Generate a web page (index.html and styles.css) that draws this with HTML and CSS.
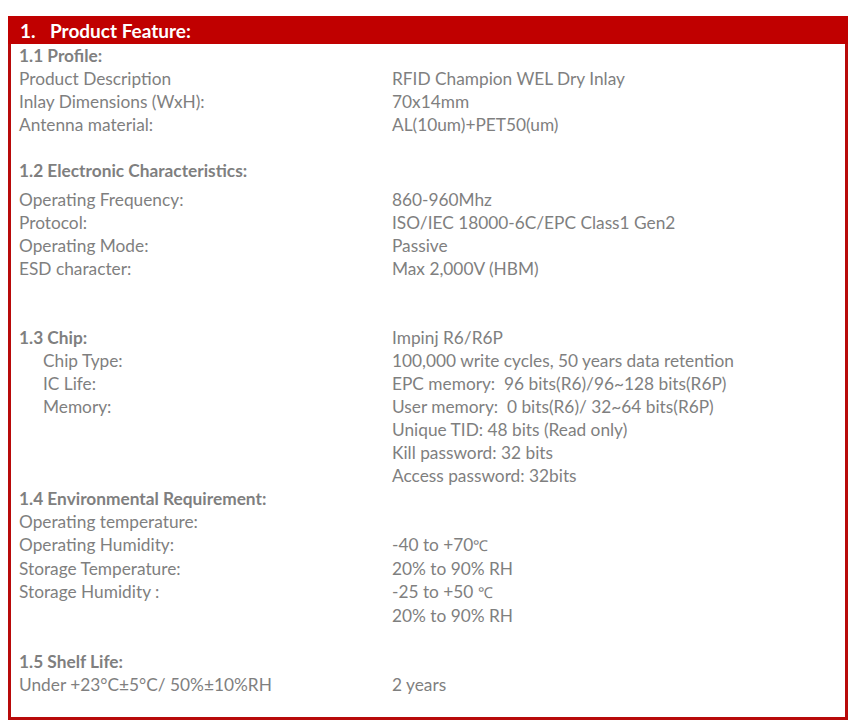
FILE: index.html
```html
<!DOCTYPE html>
<html>
<head>
<meta charset="utf-8">
<link rel="stylesheet" href="styles.css">
</head>
<body>
<div class="box">
  <div class="head"><span class="num">1.</span>Product Feature:</div>
  <div class="grid">
    <div class="h full">1.1 Profile:</div>
    <div>Product Description</div><div>RFID Champion WEL Dry Inlay</div>
    <div>Inlay Dimensions (WxH):</div><div>70x14mm</div>
    <div>Antenna material:</div><div>AL(10um)+PET50(um)</div>
    <div class="full blank"></div>
    <div class="h full gap">1.2 Electronic Characteristics:</div>
    <div>Operating Frequency:</div><div>860-960Mhz</div>
    <div>Protocol:</div><div>ISO/IEC 18000-6C/EPC Class1 Gen2</div>
    <div>Operating Mode:</div><div>Passive</div>
    <div>ESD character:</div><div>Max 2,000V (HBM)</div>
    <div class="full blank"></div>
    <div class="full blank"></div>
    <div class="h">1.3 Chip:</div><div>Impinj R6/R6P</div>
    <div class="ind">Chip Type:</div><div>100,000 write cycles, 50 years data retention</div>
    <div class="ind">IC Life:</div><div>EPC memory:&nbsp; 96 bits(R6)/96~128 bits(R6P)</div>
    <div class="ind">Memory:</div><div>User memory:&nbsp; 0 bits(R6)/ 32~64 bits(R6P)</div>
    <div></div><div>Unique TID: 48 bits (Read only)</div>
    <div></div><div>Kill password: 32 bits</div>
    <div></div><div>Access password: 32bits</div>
    <div class="h full">1.4 Environmental Requirement:</div>
    <div>Operating temperature:</div><div></div>
    <div>Operating Humidity:</div><div>-40 to +70<span class="deg">℃</span></div>
    <div>Storage Temperature:</div><div>20% to 90% RH</div>
    <div>Storage Humidity :</div><div>-25 to +50 <span class="deg">℃</span></div>
    <div></div><div>20% to 90% RH</div>
    <div class="full blank"></div>
    <div class="h full">1.5 Shelf Life:</div>
    <div>Under +23°C±5°C/ 50%±10%RH</div><div>2 years</div>
  </div>
</div>
</body>
</html>
```
FILE: styles.css
```css
html, body {
  margin: 0;
  padding: 0;
  background: #ffffff;
}
body {
  padding: 16px 7px 0 8px;
  font-family: Lato, "Open Sans", sans-serif;
}
.box {
  width: 840px;
  height: 704px;
  box-sizing: border-box;
  border: 3px solid #b80a0a;
  border-top: none;
}
.head {
  margin: 0 -3px;
  height: 28px;
  background: #c00000;
  color: #ffffff;
  font-weight: 700;
  font-size: 19px;
  line-height: 29px;
  padding-left: 12px;
  box-sizing: border-box;
}
.head .num {
  display: inline-block;
  width: 30px;
}
.grid {
  display: grid;
  grid-template-columns: 373px 1fr;
  padding-left: 8px;
  font-size: 17.3px;
  line-height: 23px;
  color: #7f7f7f;
}
.full {
  grid-column: 1 / 3;
}
.blank {
  height: 23px;
}
.h {
  font-weight: 700;
}
.gap {
  margin-bottom: 6px;
}
.ind {
  padding-left: 24px;
}
.deg {
  font-size: 15px;
}
```
